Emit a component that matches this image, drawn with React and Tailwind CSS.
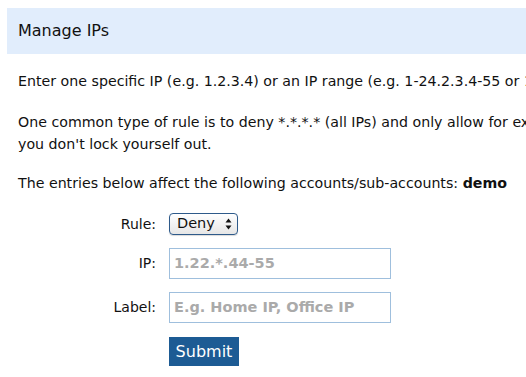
export default function App() {
  return (
    <div className="w-[526px] h-[377px] overflow-hidden bg-white text-[#111] font-['DejaVu_Sans',Verdana,sans-serif]">
      <div className="pt-2 pl-[7px]">
        <div className="h-[46px] bg-[#e1edfc] pl-[11px] flex items-center text-[16px] pb-[1px]">
          Manage IPs
        </div>
        <div className="pl-[11px] text-[14.2px] leading-[22px] whitespace-nowrap">
          <p className="mt-[16px]">
            Enter one specific IP (e.g. 1.2.3.4) or an IP range (e.g. 1-24.2.3.4-55 or 1.2.*.4).
          </p>
          <p className="mt-[19px]">
            One common type of rule is to deny *.*.*.* (all IPs) and only allow for exactly your IP, so that
            <br />
            you don't lock yourself out.
          </p>
          <p className="mt-[17px]">
            The entries below affect the following accounts/sub-accounts: <b>demo</b>
          </p>
        </div>
        <div className="mt-[19px] grid grid-cols-[149px_auto] gap-x-[13px] items-center text-[14px]">
          <div className="text-right">Rule:</div>
          <div>
            <div className="w-[69px] h-[22px] rounded-[4px] border border-[#2e5a8a] bg-gradient-to-b from-white to-[#e6e6e6] flex items-center justify-between pl-[7px] pr-[5px] text-[14.5px] shadow-[0_1px_1px_rgba(0,0,0,0.15)]">
              <span>Deny</span>
              <svg width="7" height="12" viewBox="0 0 7 12">
                <path d="M3.5 0.5 L6.5 4.5 H0.5 Z" fill="#111" />
                <path d="M3.5 11.5 L6.5 7.5 H0.5 Z" fill="#111" />
              </svg>
            </div>
          </div>
          <div className="text-right mt-[13px]">IP:</div>
          <div className="mt-[13px]">
            <div className="w-[222px] h-[31px] border border-[#9fbfdd] flex items-center pl-[4px] text-[14.5px] font-bold text-[#aaa]">
              1.22.*.44-55
            </div>
          </div>
          <div className="text-right mt-[13px]">Label:</div>
          <div className="mt-[13px]">
            <div className="w-[222px] h-[31px] border border-[#9fbfdd] flex items-center pl-[4px] text-[14.5px] font-bold text-[#aaa]">
              E.g. Home IP, Office IP
            </div>
          </div>
          <div></div>
          <div className="mt-[14px]">
            <div className="w-[70px] h-[29px] bg-[#1d5b94] text-white text-[16px] flex items-center justify-center">
              Submit
            </div>
          </div>
        </div>
      </div>
    </div>
  );
}
